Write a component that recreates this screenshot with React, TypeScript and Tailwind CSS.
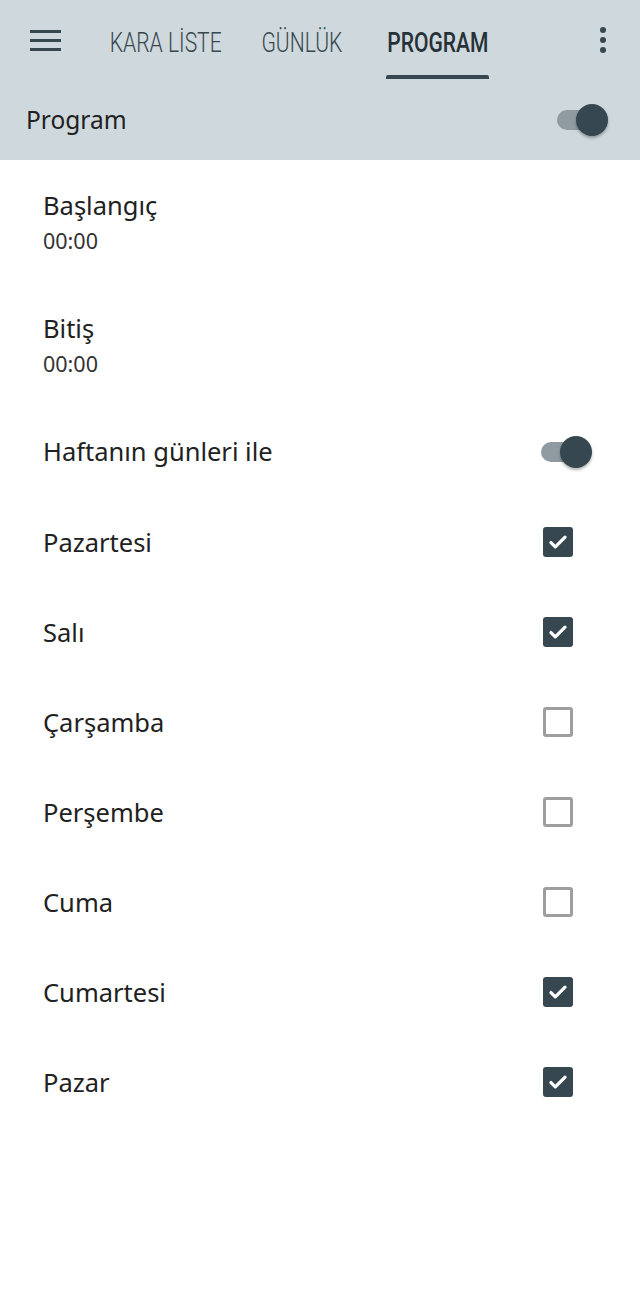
import React from "react";

const days: [string, boolean][] = [
  ["Pazartesi", true],
  ["Salı", true],
  ["Çarşamba", false],
  ["Perşembe", false],
  ["Cuma", false],
  ["Cumartesi", true],
  ["Pazar", true],
];

function Toggle() {
  return (
    <div className="relative w-[52px] h-[34px] flex items-center">
      <div className="w-[46px] h-[20px] rounded-full bg-[#8f9ba0] ml-[1px]" />
      <div className="absolute right-0 top-[1px] w-[32px] h-[32px] rounded-full bg-[#37474f] shadow-[0_2px_3px_rgba(0,0,0,0.3)]" />
    </div>
  );
}

function Check({ on }: { on: boolean }) {
  return on ? (
    <div className="w-[30px] h-[30px] rounded-[3px] bg-[#37474f] flex items-center justify-center">
      <svg width="26" height="26" viewBox="0 0 24 24">
        <path d="M5.5 12.5l4 4L18.5 7.5" fill="none" stroke="white" strokeWidth="3" strokeLinecap="round" strokeLinejoin="round" />
      </svg>
    </div>
  ) : (
    <div className="w-[30px] h-[30px] rounded-[3px] border-[3px] border-[#9e9e9e] bg-white" />
  );
}

export default function App() {
  const font = { fontFamily: '"Noto Sans", "Open Sans", sans-serif' };
  const tabFont = { fontFamily: '"Roboto", sans-serif' };
  return (
    <div className="w-[640px] h-[1296px] bg-white text-[#212121]" style={font}>
      <div className="bg-[#cfd8dc]">
        <div className="h-[80px] flex items-stretch">
          <div className="w-[98px] flex items-center pl-[30px]">
            <div className="flex flex-col gap-[6px]">
              <div className="w-[31px] h-[3px] bg-[#37474f]" />
              <div className="w-[31px] h-[3px] bg-[#37474f]" />
              <div className="w-[31px] h-[3px] bg-[#37474f]" />
            </div>
          </div>
          <div className="flex items-stretch text-[27px] text-[#37474f]" style={tabFont}>
            <div className="w-[136px] flex items-center justify-center pt-[6px]">
              <span className="inline-block scale-x-[0.78] origin-center font-light whitespace-nowrap">KARA LİSTE</span>
            </div>
            <div className="w-[136px] flex items-center justify-center pt-[6px]">
              <span className="inline-block scale-x-[0.78] origin-center font-light whitespace-nowrap">GÜNLÜK</span>
            </div>
            <div className="relative w-[136px] flex items-center justify-center pt-[6px]">
              <span className="inline-block scale-x-[0.78] origin-center font-medium text-[#263238] whitespace-nowrap">PROGRAM</span>
              <div className="absolute bottom-[1px] left-[16px] right-[17px] h-[4px] rounded-t-[2px] bg-[#37474f]" />
            </div>
          </div>
          <div className="flex-1" />
          <div className="w-[74px] flex items-center justify-center">
            <div className="flex flex-col gap-[4px]">
              <div className="w-[6px] h-[6px] rounded-full bg-[#37474f]" />
              <div className="w-[6px] h-[6px] rounded-full bg-[#37474f]" />
              <div className="w-[6px] h-[6px] rounded-full bg-[#37474f]" />
            </div>
          </div>
        </div>
        <div className="h-[80px] flex items-center justify-between pl-[26px] pr-[32px]">
          <span className="text-[24.5px] text-[#212121]">Program</span>
          <Toggle />
        </div>
      </div>
      <div className="pl-[43px] pr-[48px]">
        {[
          ["Başlangıç", "00:00"],
          ["Bitiş", "00:00"],
        ].map(([t, s]) => (
          <div key={t} className="h-[123px] flex flex-col justify-start pt-[27px]">
            <div className="text-[25.5px] leading-[36px]">{t}</div>
            <div className="text-[21.5px] leading-[36px] text-[#333]">{s}</div>
          </div>
        ))}
        <div className="h-[91px] flex items-center justify-between">
          <span className="text-[25.5px]">Haftanın günleri ile</span>
          <Toggle />
        </div>
        {days.map(([d, on]) => (
          <div key={d} className="h-[90px] flex items-center justify-between">
            <span className="text-[25.5px]">{d}</span>
            <div className="mr-[19px]">
              <Check on={on} />
            </div>
          </div>
        ))}
      </div>
    </div>
  );
}
